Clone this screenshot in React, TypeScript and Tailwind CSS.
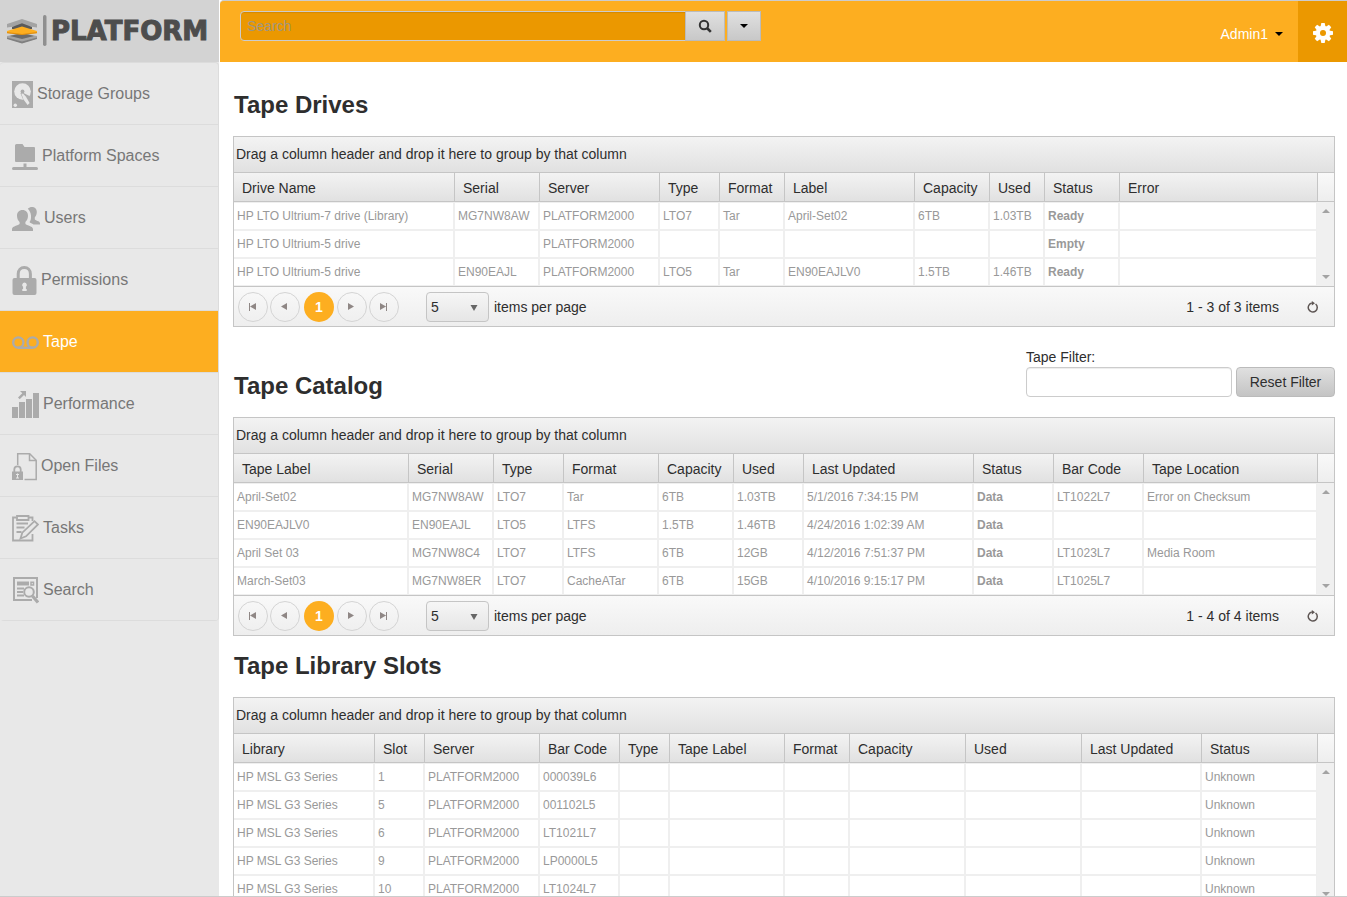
import type { ReactNode } from 'react';

/* ─── Types ─── */

type Column = { title: string; width?: number; bold?: boolean };

type NavItem = { label: string; icon: ReactNode; active?: boolean };

/* ─── Sidebar icons ─── */

const StorageIcon = () => (
    <svg width="21" height="30" viewBox="0 0 21 30" aria-hidden="true">
        <path fill="#ababab" d="M0 2h21v27H0z" />
        <circle cx="10.5" cy="12.5" r="8.300" fill="#e8e8e8" />
        <path d="M8.500 14.500l1-1.500 8 4 2.500 7-6 3z" fill="#ababab" />
        <path d="M9.300 14.800l1.500-.6 3.200 3.600 3.600 6.200-2 2-4.100-5.500z" fill="#e8e8e8" />
        <circle cx="10.5" cy="12.500" r="1.900" fill="#ababab" />
        <circle cx="3.300" cy="26.200" r="1.700" fill="#e8e8e8" />
    </svg>
);

const SpacesIcon = () => (
    <svg width="26" height="30" viewBox="0 0 26 30" fill="#ababab" aria-hidden="true">
        <path d="M4.500 3h6l2 3h9.500a1 1 0 0 1 1 1v13a1 1 0 0 1-1 1h-18a1 1 0 0 1-1-1V4.500A1.500 1.500 0 0 1 4.500 3z" />
        <path d="M11.500 22.500h3V26h-3z" />
        <rect x="0" y="26" width="26" height="3" rx="1.500" />
    </svg>
);

const UsersIcon = () => (
    <svg width="28" height="30" viewBox="0 0 28 30" fill="#ababab" aria-hidden="true">
        <path d="M10.500 7c3.500 0 5.600 2.500 5.500 6-.1 2.500-1 4.500-2.600 6v1.800c0 1.500 7.600 2.200 7.600 5.200v2H0v-2c0-3 7.600-3.700 7.600-5.200V19C6 17.500 5.100 15.500 5 13c-.1-3.500 2-6 5.500-6z" />
        <path d="M15.800 5.800C17 4.600 18.400 4 20 4c3.200 0 4.800 2.300 4.800 5 0 2.300-.8 4-2 5.300v2c0 1.300 5.200 1.700 5.200 4V21.500h-6.500c-1.500-1.300-3.300-1.500-4-2.500 2.500-2 2.200-10-1.700-13.200z" />
    </svg>
);

const LockIcon = () => (
    <svg width="25" height="30" viewBox="0 0 25 30" aria-hidden="true">
        <path d="M6.200 14V9c0-4 2.600-6.500 6.100-6.500s6.100 2.500 6.100 6.500v5" fill="none" stroke="#ababab" strokeWidth="3" />
        <rect x="0.500" y="13" width="24" height="17" rx="2" fill="#ababab" />
        <path d="M12.500 17.500a2.400 2.400 0 0 1 1.400 4.300v2.200h.8v2h-4.400v-2h.8v-2.200a2.400 2.400 0 0 1 1.400-4.300z" fill="#e8e8e8" />
    </svg>
);

const TapeIcon = () => (
    <svg width="27" height="30" viewBox="0 0 27 30" fill="none" stroke="#ababab" strokeWidth="2.400" aria-hidden="true">
        <circle cx="6.300" cy="15.500" r="5.100" />
        <circle cx="20.700" cy="15.500" r="5.100" />
        <path d="M6 20.800h15" />
    </svg>
);

const PerformanceIcon = () => (
    <svg width="27" height="30" viewBox="0 0 27 30" fill="#ababab" aria-hidden="true">
        <path d="M0 18h6v11H0zM7 13h6v16H7zM14 10h6v19h-6zM21 4h6v25h-6z" />
        <path d="M8 2h6v6l-2-2-4.300 4.200-1.700-1.700L10.300 4.300z" />
    </svg>
);

const OpenFilesIcon = () => (
    <svg width="25" height="30" viewBox="0 0 25 30" fill="none" stroke="#ababab" strokeWidth="1.500" aria-hidden="true">
        <path d="M5.700 14V2.800h12l6.500 6.500v19.200H12.500" />
        <path d="M17.500 3v6.500H24" />
        <path d="M2.300 21v-2.500a3.200 3.200 0 0 1 6.400 0V21" strokeWidth="1.800" />
        <path d="M0 20.500h11V29H0z" fill="#ababab" stroke="none" />
        <path d="M5.500 22.500v4.500M4 23.500h3M4 27h3" stroke="#e8e8e8" strokeWidth="1" />
    </svg>
);

const TasksIcon = () => (
    <svg width="27" height="30" viewBox="0 0 27 30" fill="none" stroke="#ababab" strokeWidth="1.800" aria-hidden="true">
        <path d="M4.500 4.500H1v23h19.500V21M17 4.500h3.500V8" />
        <path d="M5 3h11.500v4H5z" />
        <path d="M4.500 10.500H16M4.500 14.500h8M4.500 19h5" strokeWidth="1.800" />
        <path d="M8.500 25.500l1.800-5.800L22.500 8.200 26 11.500 14 23.300z" strokeWidth="1.800" />
    </svg>
);

const SearchPageIcon = () => (
    <svg width="27" height="30" viewBox="0 0 27 30" fill="none" stroke="#ababab" strokeWidth="2" aria-hidden="true">
        <path d="M20 25H2V3h23v20" />
        <path d="M5 6.500h12v4H5z" fill="#ababab" stroke="none" />
        <path d="M19 7.200h2.500v2.800H19z" strokeWidth="1.500" />
        <path d="M5 13.500h7M5 17h6M5 20.500h7" strokeWidth="1.800" />
        <circle cx="17" cy="17" r="4.800" fill="#e8e8e8" />
        <path d="M20.500 21l5.500 6.500" strokeWidth="3.200" />
    </svg>
);

/* ─── Small glyphs ─── */

const Caret = ({ className = '' }: { className?: string }) => (
    <svg width="8" height="4" viewBox="0 0 8 4" className={className} aria-hidden="true">
        <path d="M0 0h8L4 4z" fill="currentColor" />
    </svg>
);

const MagnifierIcon = () => (
    <svg width="14" height="14" viewBox="0 0 14 14" fill="none" stroke="#333" strokeWidth="2" aria-hidden="true">
        <circle cx="6" cy="6" r="4.200" />
        <path d="M9 9l3.800 3.800" strokeWidth="2.600" />
    </svg>
);

const GearIcon = () => (
    <svg width="20" height="20" viewBox="-10 -10 20 20" aria-hidden="true">
        {[0, 45, 90, 135].map((angle) => (
            <path key={angle} d="M-1.700-10h3.400L2.500-6v12L1.700 10h-3.400L-2.500 6V-6z" fill="#fff" transform={`rotate(${angle})`} />
        ))}
        <circle r="7.200" fill="#fff" />
        <circle r="3" fill="#eb9800" />
    </svg>
);

const RefreshIcon = () => (
    <svg width="12" height="12" viewBox="0 0 12 12" aria-hidden="true">
        <path d="M8.600 3A4.500 4.500 0 1 1 4.800 2.100" fill="none" stroke="#5e5654" strokeWidth="1.500" />
        <path d="M4.800 0L8 2.200 4.800 4.600z" fill="#5e5654" />
    </svg>
);

const pagerArrows = {
    first: 'M0 0h1v8H0zM7 0v7L1 3.500z',
    prev: 'M6 0v7L0 3.500z',
    next: 'M0 0v7l6-3.500z',
    last: 'M6 0h1v8H6zM0 0v7l6-3.500z',
};

/* ─── Logo ─── */

function Logo() {
    return (
        <a href="#" className="flex h-[62px] items-center bg-[#d3d3d3] pl-[7px]">
            <svg width="40" height="32" viewBox="0 0 40 32" aria-hidden="true">
                <path d="M0 21l15-3 15 3v2.500l-15 4.500-15-4.500z" fill="#a3a3a3" />
                <path d="M3 21l12-3 12 3-12 3z" fill="#6b6b6b" />
                <path d="M0 22.500l15 4 15-4v1.500l-15 4.500L0 24z" fill="#808080" />
                <path d="M0 9l15-5 15 5v3.500l-15-2-15 2z" fill="#a3a3a3" />
                <path d="M5 12l10-3.800L25 12v2H5z" fill="#5a5a5a" />
                <path d="M0 16l15-4.500L30 16v2l-15 1.500L0 18z" fill="#fdae20" />
                <path d="M0 17l15 2 15-2v1.300L15 20 0 18.300z" fill="#e08f10" />
                <rect x="36" y="0" width="3.500" height="31" rx="1.700" fill="#8f8f8f" />
            </svg>
            <span className="ml-1 font-['DejaVu_Sans',sans-serif] text-[26px] leading-8 font-bold text-[#4d4d4d] [-webkit-text-stroke:1px_#4d4d4d]">
                PLATFORM
            </span>
        </a>
    );
}

/* ─── Sidebar ─── */

const navItems: NavItem[] = [
    { label: 'Storage Groups', icon: <StorageIcon /> },
    { label: 'Platform Spaces', icon: <SpacesIcon /> },
    { label: 'Users', icon: <UsersIcon /> },
    { label: 'Permissions', icon: <LockIcon /> },
    { label: 'Tape', icon: <TapeIcon />, active: true },
    { label: 'Performance', icon: <PerformanceIcon /> },
    { label: 'Open Files', icon: <OpenFilesIcon /> },
    { label: 'Tasks', icon: <TasksIcon /> },
    { label: 'Search', icon: <SearchPageIcon /> },
];

function Sidebar() {
    return (
        <aside className="w-[219px] shrink-0 bg-[#e8e8e8]">
            <Logo />
            <nav className="overflow-hidden rounded border-t border-r border-[#dcdcdc]">
                {navItems.map((item) => (
                    <a
                        key={item.label}
                        href="#"
                        className={`flex h-[62px] items-center gap-1 border-b border-[#dcdcdc] pl-3 text-base ${
                            item.active ? 'bg-[#fdae20] text-white' : 'text-[#777]'
                        }`}
                    >
                        {item.icon}
                        {item.label}
                    </a>
                ))}
            </nav>
        </aside>
    );
}

/* ─── Top bar ─── */

function TopBar() {
    return (
        <header className="ml-px flex h-[62px] rounded-tl border-t border-[#ccc] bg-[#fdae20]">
            <form className="flex pt-[10px] pl-5" onSubmit={(e) => e.preventDefault()}>
                <input
                    type="text"
                    placeholder="Search"
                    aria-label="Search"
                    className="h-[30px] w-[446px] rounded-l border border-[#ccc] bg-[#eb9800] px-[6px] text-sm text-white shadow-[inset_0_1px_1px_rgba(0,0,0,0.1)] outline-none placeholder:text-[#a0967f]"
                />
                <button
                    type="submit"
                    aria-label="Run search"
                    className="-ml-px flex h-[30px] w-[40px] items-center justify-center border border-[#bbb] bg-linear-to-b from-[#e0e0e0] to-[#c8c8c8]"
                >
                    <MagnifierIcon />
                </button>
                <button
                    type="button"
                    aria-label="Search options"
                    className="ml-[2px] flex h-[30px] w-[34px] items-center justify-center border border-[#bbb] bg-linear-to-b from-[#e0e0e0] to-[#c8c8c8]"
                >
                    <Caret className="text-black" />
                </button>
            </form>
            <div className="ml-auto flex">
                <button type="button" className="flex items-center gap-[7px] pt-1 pr-[15px] text-sm text-white">
                    Admin1
                    <Caret className="text-black" />
                </button>
                <button
                    type="button"
                    aria-label="Settings"
                    className="flex w-[49px] items-center justify-center bg-[#eb9800] pt-[2px]"
                >
                    <GearIcon />
                </button>
            </div>
        </header>
    );
}

/* ─── Grid ─── */

function PagerButton({ label, path }: { label: string; path: string }) {
    return (
        <button
            type="button"
            aria-label={label}
            className="flex size-[30px] items-center justify-center rounded-full border border-[#d4d4d4]"
        >
            <svg width="8" height="8" viewBox="0 0 8 8" aria-hidden="true">
                <path d={path} fill="#8f8785" />
            </svg>
        </button>
    );
}

function Pager({ total }: { total: number }) {
    return (
        <div className="flex h-[40px] items-center gap-[2px] border-t border-[#c5c5c5] bg-linear-to-b from-[#f9f9f9] to-[#eee] pl-1 text-sm">
            <PagerButton label="First page" path={pagerArrows.first} />
            <PagerButton label="Previous page" path={pagerArrows.prev} />
            <button
                type="button"
                className="mr-px ml-[2px] size-[30px] rounded-full bg-[#fdae20] text-sm font-bold text-white"
            >
                1
            </button>
            <PagerButton label="Next page" path={pagerArrows.next} />
            <PagerButton label="Last page" path={pagerArrows.last} />
            <label className="ml-[25px] flex items-center gap-[5px]">
                <span className="relative">
                    <select
                        defaultValue="5"
                        className="block h-[30px] w-[63px] appearance-none rounded border border-[#c5c5c5] bg-linear-to-b from-[#f6f6f6] to-[#e6e6e6] pl-1 text-sm"
                    >
                        <option>5</option>
                        <option>10</option>
                        <option>20</option>
                    </select>
                    <svg
                        width="8"
                        height="6"
                        viewBox="0 0 8 6"
                        className="pointer-events-none absolute top-[13px] right-[11px]"
                        aria-hidden="true"
                    >
                        <path d="M0.500 0h7L4 6z" fill="#666" />
                    </svg>
                </span>
                items per page
            </label>
            <span className="ml-auto">
                1 - {total} of {total} items
            </span>
            <button
                type="button"
                aria-label="Refresh"
                className="mr-[6px] ml-[17px] flex size-[30px] items-center justify-center"
            >
                <RefreshIcon />
            </button>
        </div>
    );
}

function DataGrid({
    label,
    columns,
    rows,
    pager = true,
}: {
    label: string;
    columns: Column[];
    rows: string[][];
    pager?: boolean;
}) {
    return (
        <section aria-label={label} className="border border-[#c5c5c5]">
            <div className="flex h-[36px] items-center border-b border-[#c5c5c5] bg-linear-to-b from-[#f3f3f3] to-[#e1e1e1] pb-[2px] pl-[2px] text-sm">
                Drag a column header and drop it here to group by that column
            </div>
            <table className="w-full table-fixed border-separate border-spacing-0">
                <colgroup>
                    {columns.map((col) => (
                        <col key={col.title} style={col.width ? { width: col.width } : undefined} />
                    ))}
                    <col className="w-[17px]" />
                </colgroup>
                <thead>
                    <tr className="h-[29px] text-left text-sm">
                        {columns.map((col) => (
                            <th
                                key={col.title}
                                className="overflow-hidden border-b border-l border-[#c5c5c5] bg-linear-to-b from-[#f3f3f3] to-[#e1e1e1] py-0 pt-[2px] pl-2 font-normal whitespace-nowrap first:border-l-0"
                            >
                                {col.title}
                            </th>
                        ))}
                        <td className="border-b border-l border-[#c5c5c5] bg-linear-to-b from-[#f9f9f9] to-[#eee]" />
                    </tr>
                </thead>
                <tbody className="text-xs text-[#999]">
                    {rows.map((row, i) => (
                        <tr key={i} className="h-[28px]">
                            {row.map((cell, j) => (
                                <td
                                    key={j}
                                    className={`overflow-hidden border border-[#efefef] px-[3px] py-0 whitespace-nowrap first:border-l-0 ${
                                        columns[j].bold ? 'font-bold' : ''
                                    }`}
                                >
                                    {cell}
                                </td>
                            ))}
                            {i === 0 && (
                                <td rowSpan={rows.length} className="h-px bg-[#f0f0f0] p-0">
                                    <div className="flex h-full flex-col items-center justify-between py-[7px] text-[#a3a3a3]">
                                        <Caret className="rotate-180" />
                                        <Caret />
                                    </div>
                                </td>
                            )}
                        </tr>
                    ))}
                </tbody>
            </table>
            {pager && <Pager total={rows.length} />}
        </section>
    );
}

/* ─── Data ─── */

const driveColumns: Column[] = [
    { title: 'Drive Name', width: 220 },
    { title: 'Serial', width: 85 },
    { title: 'Server', width: 120 },
    { title: 'Type', width: 60 },
    { title: 'Format', width: 65 },
    { title: 'Label', width: 130 },
    { title: 'Capacity', width: 75 },
    { title: 'Used', width: 55 },
    { title: 'Status', width: 75, bold: true },
    { title: 'Error' },
];

const drives = [
    ['HP LTO Ultrium-7 drive (Library)', 'MG7NW8AW', 'PLATFORM2000', 'LTO7', 'Tar', 'April-Set02', '6TB', '1.03TB', 'Ready', ''],
    ['HP LTO Ultrium-5 drive', '', 'PLATFORM2000', '', '', '', '', '', 'Empty', ''],
    ['HP LTO Ultrium-5 drive', 'EN90EAJL', 'PLATFORM2000', 'LTO5', 'Tar', 'EN90EAJLV0', '1.5TB', '1.46TB', 'Ready', ''],
];

const catalogColumns: Column[] = [
    { title: 'Tape Label' },
    { title: 'Serial', width: 85 },
    { title: 'Type', width: 70 },
    { title: 'Format', width: 95 },
    { title: 'Capacity', width: 75 },
    { title: 'Used', width: 70 },
    { title: 'Last Updated', width: 170 },
    { title: 'Status', width: 80, bold: true },
    { title: 'Bar Code', width: 90 },
    { title: 'Tape Location' },
];

const catalog = [
    ['April-Set02', 'MG7NW8AW', 'LTO7', 'Tar', '6TB', '1.03TB', '5/1/2016 7:34:15 PM', 'Data', 'LT1022L7', 'Error on Checksum'],
    ['EN90EAJLV0', 'EN90EAJL', 'LTO5', 'LTFS', '1.5TB', '1.46TB', '4/24/2016 1:02:39 AM', 'Data', '', ''],
    ['April Set 03', 'MG7NW8C4', 'LTO7', 'LTFS', '6TB', '12GB', '4/12/2016 7:51:37 PM', 'Data', 'LT1023L7', 'Media Room'],
    ['March-Set03', 'MG7NW8ER', 'LTO7', 'CacheATar', '6TB', '15GB', '4/10/2016 9:15:17 PM', 'Data', 'LT1025L7', ''],
];

const slotColumns: Column[] = [
    { title: 'Library', width: 140 },
    { title: 'Slot', width: 50 },
    { title: 'Server', width: 115 },
    { title: 'Bar Code', width: 80 },
    { title: 'Type', width: 50 },
    { title: 'Tape Label', width: 115 },
    { title: 'Format', width: 65 },
    { title: 'Capacity' },
    { title: 'Used' },
    { title: 'Last Updated', width: 120 },
    { title: 'Status' },
];

const slots = [
    ['1', '000039L6'],
    ['5', '001102L5'],
    ['6', 'LT1021L7'],
    ['9', 'LP0000L5'],
    ['10', 'LT1024L7'],
].map(([slot, barCode]) => [
    'HP MSL G3 Series', slot, 'PLATFORM2000', barCode, '', '', '', '', '', '', 'Unknown',
]);

/* ─── Page ─── */

export default function App() {
    return (
        <div className="flex h-screen overflow-hidden border-b border-[#ccc] bg-white font-['Liberation_Sans',Arial,sans-serif] text-[#2e2e2e]">
            <Sidebar />
            <div className="min-w-0 flex-1">
                <TopBar />
                <main className="pt-[23px] pr-3 pl-[14px]">
                    <h2 className="mb-[11px] pl-px text-2xl leading-10 font-bold">Tape Drives</h2>
                    <DataGrid label="Tape Drives" columns={driveColumns} rows={drives} />

                    <div className="mt-5 mb-[11px] flex h-[59px] items-start justify-between">
                        <h2 className="self-end pl-px text-2xl leading-10 font-bold">Tape Catalog</h2>
                        <div className="flex items-end gap-1 text-sm">
                            <div>
                                <label htmlFor="tape-filter" className="block leading-5">
                                    Tape Filter:
                                </label>
                                <input
                                    id="tape-filter"
                                    type="text"
                                    className="block h-[30px] w-[206px] rounded border border-[#ccc] px-[6px] shadow-[inset_0_1px_1px_rgba(0,0,0,0.075)]"
                                />
                            </div>
                            <button
                                type="button"
                                className="h-[30px] w-[99px] rounded border border-[#bbb] bg-linear-to-b from-[#e0e0e0] to-[#c4c4c4]"
                            >
                                Reset Filter
                            </button>
                        </div>
                    </div>
                    <DataGrid label="Tape Catalog" columns={catalogColumns} rows={catalog} />

                    <h2 className="mt-[10px] mb-[11px] pl-px text-2xl leading-10 font-bold">Tape Library Slots</h2>
                    <DataGrid label="Tape Library Slots" columns={slotColumns} rows={slots} pager={false} />
                </main>
            </div>
        </div>
    );
}
